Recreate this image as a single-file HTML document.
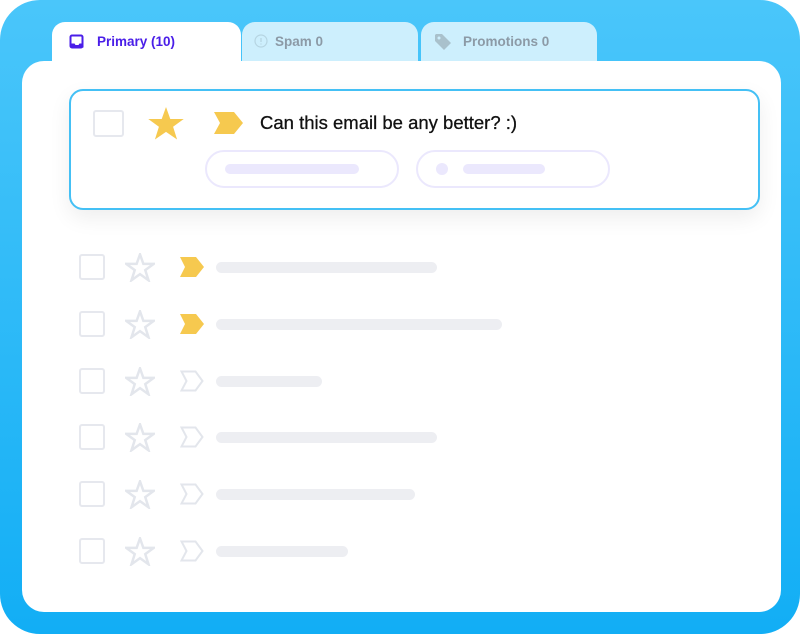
<!DOCTYPE html>
<html><head><style>
*{margin:0;padding:0;box-sizing:border-box}
body{width:800px;height:634px;overflow:hidden;background:#fff;font-family:"Liberation Sans",sans-serif}
.outer{position:absolute;left:0;top:0;width:800px;height:634px;border-radius:40px;background:linear-gradient(#4ac6fa,#12aef5)}
.tab{position:absolute;top:22px;height:40px;border-radius:13px 13px 0 0;font-size:13.5px;font-weight:bold;line-height:40px}
.panel{position:absolute;left:22px;top:61px;width:759px;height:551px;background:#fff;border-radius:22px}
.card{position:absolute;left:69px;top:89px;width:691px;height:121px;border:2px solid #44c0f5;border-radius:14px;background:#fff;box-shadow:0 8px 22px rgba(0,0,0,0.07)}
.pill{position:absolute;top:150px;height:38px;border:2px solid #ebe8fd;border-radius:19px}
.bar{position:absolute;height:10px;border-radius:5px;background:#ebe8fd}
.cb{position:absolute;border:2px solid #e6e8ee;border-radius:3px}
.gbar{position:absolute;height:11px;border-radius:6px;background:#edeef2}
svg{position:absolute}
</style></head><body>
<div class="outer"></div>
<div class="tab" style="left:52px;width:189px;background:#fff;color:#4a1ee8;padding-left:45px">Primary (10)</div>
<svg style="left:69px;top:34px" width="16" height="16" viewBox="0 0 16 16"><rect x="1.5" y="1.5" width="12" height="12" rx="1.5" fill="none" stroke="#4a1ee8" stroke-width="2"/><path d="M1.5 9.5h4l1 1.5h3l1-1.5h4v4h-13z" fill="#4a1ee8"/></svg>
<div class="tab" style="left:242px;width:176px;background:#cdeffd;color:#8c9aa6;padding-left:33px">Spam 0</div>
<svg style="left:254px;top:34px" width="14" height="14" viewBox="0 0 14 14"><circle cx="7" cy="7" r="6" fill="none" stroke="#b6d5e2" stroke-width="1.2"/><path d="M7 4v4M7 9.5v1" stroke="#b6d5e2" stroke-width="1.3"/></svg>
<div class="tab" style="left:421px;width:176px;background:#cdeffd;color:#8c9aa6;padding-left:42px">Promotions 0</div>
<svg style="left:434px;top:33px" width="18" height="18" viewBox="0 0 18 18"><path d="M1 2v6l9 9 7-7-9-9H2z" fill="#a9c1cc"/><circle cx="5" cy="5" r="1.5" fill="#cdeffd"/></svg>
<div class="panel"></div>
<div class="card"></div>
<div class="cb" style="left:93px;top:110px;width:31px;height:27px;border-radius:3px"></div>
<svg style="left:148px;top:107px" width="36" height="34" viewBox="0 0 24 23"><path d="M12 0l2.9 8.1H24l-7.2 5.3 2.7 8.6L12 16.8 4.5 22l2.7-8.6L0 8.1h9.1z" fill="#f6c94f"/></svg>
<svg style="left:214px;top:112px" width="30" height="22" viewBox="0 0 30 22"><path d="M0 0h20l9 11-9 11H0l6-11z" fill="#f6c94f"/></svg>
<div style="position:absolute;left:260px;top:112px;font-size:18.5px;font-weight:500;color:#111;-webkit-text-stroke:0.3px #111">Can this email be any better? :)</div>
<div class="pill" style="left:205px;width:194px"></div>
<div class="bar" style="left:225px;top:164px;width:134px"></div>
<div class="pill" style="left:416px;width:194px"></div>
<div class="bar" style="left:436px;top:163px;width:12px;height:12px;border-radius:6px"></div>
<div class="bar" style="left:463px;top:164px;width:82px"></div>

<div id="rows"></div>
<script>
var ys=[267,324,381,437,494,551],ends=[437,502,322,437,415,348];
var h='';
ys.forEach(function(y,i){
h+='<div class="cb" style="left:79px;top:'+(y-13)+'px;width:26px;height:26px"></div>';
h+='<svg style="left:125px;top:'+(y-14)+'px" width="30" height="29" viewBox="0 0 24 23"><path d="M12 1l2.7 7.6H23l-6.8 5 2.6 8.1L12 16.8l-6.8 4.9 2.6-8.1L1 8.6h8.3z" fill="none" stroke="#e3e6ec" stroke-width="2"/></svg>';
if(i<2)h+='<svg style="left:180px;top:'+(y-11)+'px" width="25" height="22" viewBox="0 0 25 22"><path d="M0 1h16l8 10-8 10H0l5-10z" fill="#f6c94f"/></svg>';
else h+='<svg style="left:180px;top:'+(y-11)+'px" width="25" height="22" viewBox="0 0 25 22"><path d="M1.5 1.5h14l7 9.5-7 9.5h-14l5-9.5z" fill="none" stroke="#e3e6ec" stroke-width="2"/></svg>';
h+='<div class="gbar" style="left:216px;top:'+(y-5)+'px;width:'+(ends[i]-216)+'px"></div>';
});
document.getElementById('rows').innerHTML=h;
</script>
</body></html>
